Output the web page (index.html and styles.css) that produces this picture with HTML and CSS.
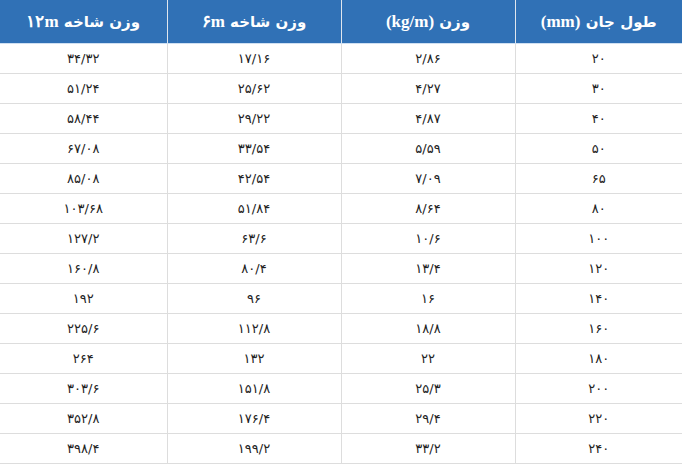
FILE: index.html
```html
<!DOCTYPE html>
<html lang="fa" dir="rtl">
<head>
<meta charset="utf-8">
<link rel="stylesheet" href="styles.css">
</head>
<body>
<table class="spec">
  <colgroup>
    <col class="c-edge"><col class="c-mid"><col class="c-mid"><col class="c-edge">
  </colgroup>
  <thead>
    <tr>
      <th>طول جان <span class="unit">(mm)</span></th>
      <th>وزن <span class="unit">(kg/m)</span></th>
      <th>وزن شاخه <span class="unit">۶m</span></th>
      <th>وزن شاخه <span class="unit">۱۲m</span></th>
    </tr>
  </thead>
  <tbody>
    <tr><td>۲۰</td><td>۲/۸۶</td><td>۱۷/۱۶</td><td>۳۴/۳۲</td></tr>
    <tr><td>۳۰</td><td>۴/۲۷</td><td>۲۵/۶۲</td><td>۵۱/۲۴</td></tr>
    <tr><td>۴۰</td><td>۴/۸۷</td><td>۲۹/۲۲</td><td>۵۸/۴۴</td></tr>
    <tr><td>۵۰</td><td>۵/۵۹</td><td>۳۳/۵۴</td><td>۶۷/۰۸</td></tr>
    <tr><td>۶۵</td><td>۷/۰۹</td><td>۴۲/۵۴</td><td>۸۵/۰۸</td></tr>
    <tr><td>۸۰</td><td>۸/۶۴</td><td>۵۱/۸۴</td><td>۱۰۳/۶۸</td></tr>
    <tr><td>۱۰۰</td><td>۱۰/۶</td><td>۶۳/۶</td><td>۱۲۷/۲</td></tr>
    <tr><td>۱۲۰</td><td>۱۳/۴</td><td>۸۰/۴</td><td>۱۶۰/۸</td></tr>
    <tr><td>۱۴۰</td><td>۱۶</td><td>۹۶</td><td>۱۹۲</td></tr>
    <tr><td>۱۶۰</td><td>۱۸/۸</td><td>۱۱۲/۸</td><td>۲۲۵/۶</td></tr>
    <tr><td>۱۸۰</td><td>۲۲</td><td>۱۳۲</td><td>۲۶۴</td></tr>
    <tr><td>۲۰۰</td><td>۲۵/۳</td><td>۱۵۱/۸</td><td>۳۰۳/۶</td></tr>
    <tr><td>۲۲۰</td><td>۲۹/۴</td><td>۱۷۶/۴</td><td>۳۵۲/۸</td></tr>
    <tr><td>۲۴۰</td><td>۳۳/۲</td><td>۱۹۹/۲</td><td>۳۹۸/۴</td></tr>
  </tbody>
</table>
</body>
</html>
```
FILE: styles.css
```css
html, body {
  margin: 0;
  padding: 0;
  background: #ffffff;
}
body {
  font-family: "DejaVu Sans", "Noto Sans", sans-serif;
  color: #222222;
}
.spec {
  width: 682px;
  border-collapse: collapse;
  table-layout: fixed;
  direction: rtl;
}
.c-edge { width: 167px; }
.c-mid { width: 174px; }
.spec th {
  background: #3071b6;
  color: #ffffff;
  height: 43px;
  padding: 0;
  font-size: 15px;
  font-weight: bold;
  text-align: center;
  vertical-align: middle;
  border-left: 1px solid #dfe6ee;
  border-right: 1px solid #dfe6ee;
  border-bottom: 1px solid #cfe0f2;
}
.spec th .unit {
  font-family: "Liberation Serif", "DejaVu Serif", serif;
  font-size: 17px;
}
.spec td {
  height: 29px;
  padding: 0;
  font-size: 13px;
  text-align: center;
  vertical-align: middle;
  border: 1px solid #dddddd;
  border-top: none;
}
.spec tr > :first-child { border-right: none; }
.spec tr > :last-child { border-left: none; }
```
